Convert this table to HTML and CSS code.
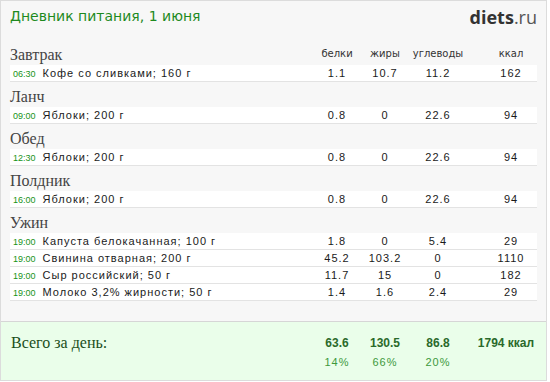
FILE: index.html
```html
<!DOCTYPE html>
<html lang="ru">
<head>
<meta charset="utf-8">
<title>Дневник питания</title>
<link rel="stylesheet" href="styles.css">
</head>
<body>
<div class="diary">
  <header class="top">
    <h1 class="title">Дневник питания, 1 июня</h1>
    <div class="logo"><b>diets</b>.ru</div>
  </header>

  <section class="meal">
    <div class="meal-head">
      <h2>Завтрак</h2>
      <span class="lbl">белки</span><span class="lbl">жиры</span><span class="lbl">углеводы</span><span class="lbl kc">ккал</span>
    </div>
    <div class="row"><span class="name"><span class="time">06:30</span>Кофе со сливками; 160 г</span><span>1.1</span><span>10.7</span><span>11.2</span><span class="kc">162</span></div>
  </section>

  <section class="meal">
    <div class="meal-head"><h2>Ланч</h2></div>
    <div class="row"><span class="name"><span class="time">09:00</span>Яблоки; 200 г</span><span>0.8</span><span>0</span><span>22.6</span><span class="kc">94</span></div>
  </section>

  <section class="meal">
    <div class="meal-head"><h2>Обед</h2></div>
    <div class="row"><span class="name"><span class="time">12:30</span>Яблоки; 200 г</span><span>0.8</span><span>0</span><span>22.6</span><span class="kc">94</span></div>
  </section>

  <section class="meal">
    <div class="meal-head"><h2>Полдник</h2></div>
    <div class="row"><span class="name"><span class="time">16:00</span>Яблоки; 200 г</span><span>0.8</span><span>0</span><span>22.6</span><span class="kc">94</span></div>
  </section>

  <section class="meal">
    <div class="meal-head"><h2>Ужин</h2></div>
    <div class="row"><span class="name"><span class="time">19:00</span>Капуста белокачанная; 100 г</span><span>1.8</span><span>0</span><span>5.4</span><span class="kc">29</span></div>
    <div class="row"><span class="name"><span class="time">19:00</span>Свинина отварная; 200 г</span><span>45.2</span><span>103.2</span><span>0</span><span class="kc">1110</span></div>
    <div class="row"><span class="name"><span class="time">19:00</span>Сыр российский; 50 г</span><span>11.7</span><span>15</span><span>0</span><span class="kc">182</span></div>
    <div class="row"><span class="name"><span class="time">19:00</span>Молоко 3,2% жирности; 50 г</span><span>1.4</span><span>1.6</span><span>2.4</span><span class="kc">29</span></div>
  </section>

  <footer class="total">
    <div class="total-label">Всего за день:</div>
    <span class="tv">63.6</span><span class="tv">130.5</span><span class="tv">86.8</span><span class="tv kt">1794 ккал</span>
    <span class="pct">14%</span><span class="pct">66%</span><span class="pct">20%</span><span class="pct kt"></span>
  </footer>
</div>
</body>
</html>
```
FILE: styles.css
```css
html, body {
  margin: 0;
  padding: 0;
  background: #ffffff;
}

.diary {
  width: 545px;
  height: 379px;
  border: 1px solid #dcdcdc;
  background: #f7f7f7;
  display: flex;
  flex-direction: column;
}

.top {
  height: 39px;
  display: flex;
  justify-content: space-between;
  align-items: flex-start;
  padding: 0 9px 0 9px;
}

.title {
  margin: 0;
  padding-top: 7px;
  font-family: "DejaVu Sans", Verdana, sans-serif;
  font-weight: normal;
  font-size: 14px;
  line-height: 17px;
  color: #1e8a1e;
}

.logo {
  padding-top: 5px;
  font-family: "Open Sans", sans-serif;
  font-size: 18px;
  line-height: 22px;
  color: #555;
}

.logo b {
  color: #333;
  font-weight: 700;
}

.meal {
  padding: 0 9px;
  display: flex;
  flex-direction: column;
}

.meal-head,
.row,
.total {
  display: grid;
  grid-template-columns: 1fr 48px 48px 58px 70px;
}

.meal-head {
  height: 25px;
}

.meal-head h2 {
  margin: 0;
  padding-top: 6px;
  font-family: "Liberation Serif", "Times New Roman", serif;
  font-weight: normal;
  font-size: 16px;
  line-height: 18px;
  color: #444;
}

.lbl {
  padding-top: 8px;
  font-family: "DejaVu Sans", Verdana, sans-serif;
  font-size: 10px;
  line-height: 12px;
  color: #333;
  text-align: center;
}

.kc {
  padding-left: 18px;
}

.kt {
  padding-left: 8px;
}

.row {
  height: 16px;
  background: #ffffff;
  border-bottom: 1px solid #e3e3e3;
  font-family: "Liberation Sans", Arial, sans-serif;
  font-size: 11px;
  line-height: 16px;
  color: #1a1a1a;
  letter-spacing: 1px;
}

.row > span {
  text-align: center;
  white-space: nowrap;
}

.row > .name {
  text-align: left;
  padding-left: 3px;
}

.time {
  font-family: "Liberation Sans", Arial, sans-serif;
  font-size: 9px;
  letter-spacing: 0;
  color: #179317;
  margin-right: 7px;
}

.total {
  margin-top: auto;
  height: 59px;
  box-sizing: border-box;
  padding: 11px 9px 0 9px;
  background: #eafeea;
  border-top: 1px solid #d6d6d6;
  grid-template-rows: 20px 18px;
  align-content: start;
}

.total-label {
  grid-row: 1 / 3;
  font-family: "Liberation Serif", "Times New Roman", serif;
  font-size: 16px;
  line-height: 20px;
  color: #1a4f1a;
  padding-left: 1px;
}

.tv {
  font-family: "Liberation Sans", Arial, sans-serif;
  font-weight: bold;
  font-size: 12px;
  line-height: 20px;
  color: #2a6a2a;
  text-align: center;
  white-space: nowrap;
}

.pct {
  font-family: "Liberation Sans", Arial, sans-serif;
  font-size: 11px;
  line-height: 18px;
  letter-spacing: 1px;
  color: #3d993d;
  text-align: center;
}
```
